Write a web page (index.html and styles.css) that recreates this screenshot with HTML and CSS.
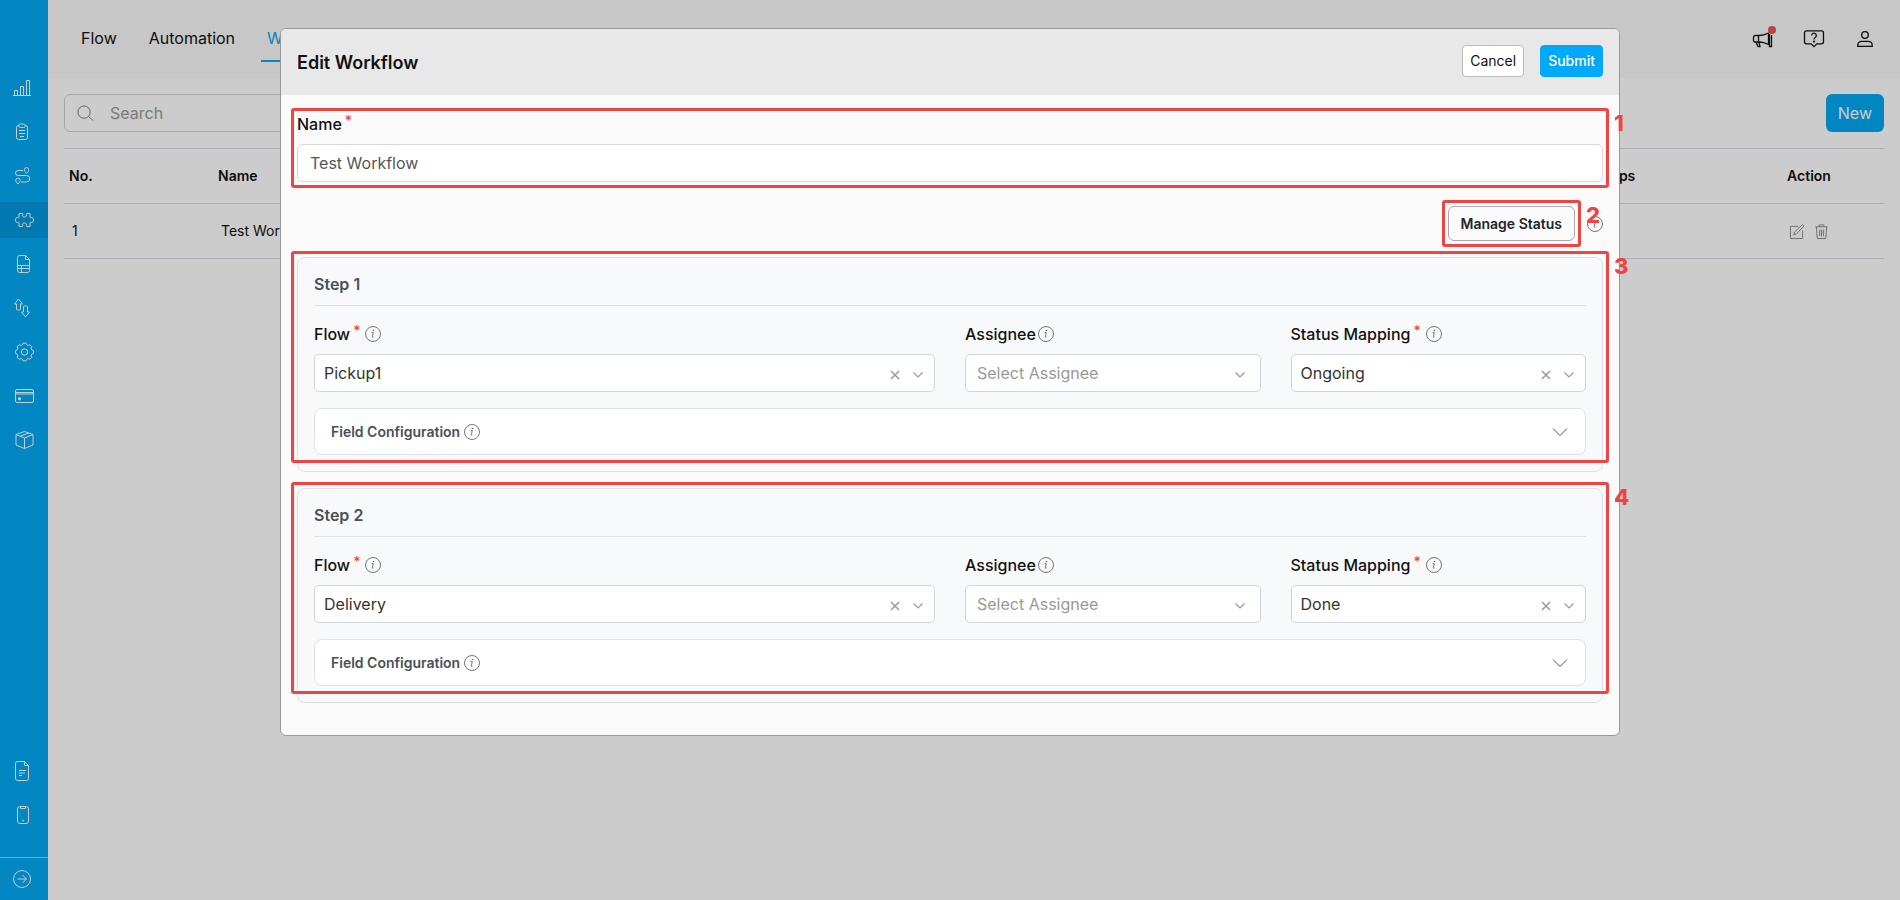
FILE: index.html
```html
<!DOCTYPE html>
<html lang="en">
<head>
  <meta charset="UTF-8" />
  <meta name="viewport" content="width=device-width, initial-scale=1.0">
  <title>Edit Workflow</title>
  <link rel="stylesheet" href="styles.css">
</head>
<body>
  <!-- shared icons -->
  <svg class="sprite" aria-hidden="true">
    <symbol id="info" viewBox="0 0 16 16">
      <circle cx="8" cy="8" r="7.5" fill="none" stroke="currentColor" stroke-width="0.9"/>
      <path d="M6.6 6.6h1.7l-1 4.2c-.1.5.2.6 1.1.2" fill="none" stroke="currentColor" stroke-width="0.9"/>
      <circle cx="8.5" cy="4.5" r="0.8" fill="currentColor"/>
    </symbol>
    <symbol id="chevron" viewBox="0 0 16 16">
      <path d="M1 4.5l7 7 7-7" fill="none" stroke="currentColor"/>
    </symbol>
    <symbol id="chevron-small" viewBox="0 0 10 10">
      <path d="M.5 2.5L5 7l4.5-4.5" fill="none" stroke="currentColor" stroke-width="1.2"/>
    </symbol>
    <symbol id="clear" viewBox="0 0 10 10">
      <path d="M1 1l8 8M9 1L1 9" fill="none" stroke="currentColor" stroke-width="1.5"/>
    </symbol>
  </svg>

  <div class="app">
    <nav class="sidebar" aria-label="Main">
      <a href="#" class="side-link" aria-label="Dashboard">
        <svg viewBox="0 0 20 20"><path d="M-1 17.5h18M.5 17.5v-5h3v5M6.500 17.5v-9h3v9M12.5 17.5v-15h3v15"/></svg>
      </a>
      <a href="#" class="side-link" aria-label="Tasks">
        <svg viewBox="0 0 20 20"><path d="M5 3.500H4.500a2 2 0 0 0-2 2v10a2 2 0 0 0 2 2h7a2 2 0 0 0 2-2v-10a2 2 0 0 0-2-2H11M6.500 2h3a1.500 1.500 0 0 1 0 3.500h-3a1.500 1.500 0 0 1 0-3.500zM5 8.500h6M5 11.500h6M6 14.500h4"/></svg>
      </a>
      <a href="#" class="side-link" aria-label="Routes">
        <svg viewBox="0 0 20 20"><path d="M12.500 7.500c-1.500-1.600-2.200-2.600-2.200-3.700a2.200 2.200 0 0 1 4.400 0c0 1.100-.7 2.100-2.200 3.700zM4 18c-1.500-1.600-2.200-2.600-2.200-3.700a2.200 2.200 0 0 1 4.400 0c0 1.100-.7 2.100-2.200 3.700zM9 4.500H4a2.300 2.300 0 0 0 0 5h8.500a3 3 0 0 1 0 6.500H7"/></svg>
      </a>
      <a href="#" class="side-link active" aria-label="Workflow">
        <svg viewBox="0 0 20 20"><path d="M5 3.500h3c1 0 1 .8.600 1.500-.5 1.200.5 2 1.900 2s2.400-.8 1.900-2c-.4-.7-.4-1.500.6-1.500h3v3.500c0 1 .8.900 1.400.6 1.200-.5 2.100.7 2.100 2.400s-.9 2.900-2.100 2.400c-.6-.3-1.400-.4-1.400.6v3.500h-3c-1 0-1-.8-.6-1.500.5-1.200-.5-2-1.900-2s-2.400.8-1.900 2c.4.7.4 1.500-.6 1.500H5V13c0-1-.8-.9-1.400-.6-1.200.5-2.100-.7-2.100-2.400s.9-2.900 2.100-2.400c.6.300 1.400.4 1.400-.6z"/></svg>
      </a>
      <a href="#" class="side-link" aria-label="Reports">
        <svg viewBox="0 0 20 20"><path d="M5.500 1.500h6l4 4v11a2 2 0 0 1-2 2h-8a2 2 0 0 1-2-2v-13a2 2 0 0 1 2-2zM11.500 1.500v4h4M3.500 11.500h12M3.500 14.500h12M7.500 11.500v7"/></svg>
      </a>
      <a href="#" class="side-link" aria-label="Import and export">
        <svg viewBox="0 0 20 20"><path d="M4.500 1L.5 6h2v5.500a1 1 0 0 0 1 .5h2a1 1 0 0 0 1-.5V6h2zM11.500 19l4-5h-2V8.500a1 1 0 0 0-1-.5h-2a1 1 0 0 0-1 .5V14h-2z"/></svg>
      </a>
      <a href="#" class="side-link" aria-label="Settings">
        <svg viewBox="0 0 20 20"><path d="M9.100 1.100h2.800Q12.800 4.500 15.800 2.700l2 2Q16 7.700 19.400 8.600v2.800Q16 12.300 17.800 15.300l-2 2Q12.800 15.500 11.900 18.900H9.100Q8.200 15.500 5.200 17.300l-2-2Q5 12.300 1.600 11.400V8.600Q5 7.700 3.200 4.700l2-2Q8.200 4.500 9.100 1.100z"/><circle cx="10.5" cy="10" r="3.200"/></svg>
      </a>
      <a href="#" class="side-link" aria-label="Billing">
        <svg viewBox="0 0 20 20"><rect x="1.5" y="3.5" width="18" height="13" rx="1.5"/><path d="M1.500 6.500h18M1.500 8h18"/><circle class="dot" cx="5.5" cy="12.8" r="1.2"/></svg>
      </a>
      <a href="#" class="side-link" aria-label="Products">
        <svg viewBox="0 0 20 20"><path d="M10.500 1.500l8.500 3v10.500l-8.500 3.500L2 15V4.500zM2 4.500l8.500 3.500L19 4.500M10.500 8v10.500M6 6.200L14.800 3"/></svg>
      </a>
      <div class="side-bottom">
        <a href="#" class="side-link" aria-label="Documents">
          <svg viewBox="0 0 20 20"><path d="M3.500.5h7l4 4v13a2 2 0 0 1-2 2h-9a2 2 0 0 1-2-2v-15a2 2 0 0 1 2-2zM10.500.5v4h4M5 9.500h7M5 12h6M5 14.500h3"/></svg>
        </a>
        <a href="#" class="side-link" aria-label="Mobile app">
          <svg viewBox="0 0 20 20"><rect x="3.5" y="1.5" width="11" height="17" rx="2.5"/><path d="M6.500 2v1.500h5V2"/><circle class="dot" cx="9" cy="15.5" r="0.5"/></svg>
        </a>
        <a href="#" class="side-link side-expand" aria-label="Expand menu">
          <svg viewBox="0 0 20 20"><circle cx="8" cy="10" r="8.5"/><path d="M3.500 10h9M8.500 6l4 4-4 4"/></svg>
        </a>
      </div>
    </nav>

    <div class="page">
      <header class="topbar">
        <nav class="tabs" aria-label="Sections">
          <a href="#">Flow</a>
          <a href="#">Automation</a>
          <a href="#" class="current">Workflow</a>
        </nav>
        <div class="top-icons">
          <button class="icon-btn has-alert" aria-label="Announcements">
            <svg viewBox="0 0 20 20"><path d="M2 6.500h4.500c3 0 6-1 9-2.500v11.500c-3-1.500-6-2.500-9-2.500H2A1.700 1.700 0 0 1 .5 11.300V8.200A1.700 1.700 0 0 1 2 6.500zM5.500 6.500V13M3 13l2 4.500h2L6 13M16.500 5v12.500h2V6"/></svg>
          </button>
          <button class="icon-btn" aria-label="Help">
            <svg viewBox="0 0 20 20"><path d="M2.500 1.800h15a2 2 0 0 1 2 2v9a2 2 0 0 1-2 2h-4.700L10 17.600l-2.800-2.800H2.500a2 2 0 0 1-2-2v-9a2 2 0 0 1 2-2zM7.700 6.500a2.300 2.300 0 1 1 3.500 2c-.9.500-1.200.9-1.200 2"/><circle class="dot" cx="10" cy="12.6" r="0.5"/></svg>
          </button>
          <button class="icon-btn" aria-label="Account">
            <svg viewBox="0 0 20 20"><circle cx="10" cy="6" r="3.3"/><path d="M2.800 17.300v-1.100c0-2.500 1.700-3.900 4.200-3.900h6c2.500 0 4.200 1.400 4.200 3.900v1.100z"/></svg>
          </button>
        </div>
      </header>

      <main class="content">
        <div class="toolbar">
          <div class="search">
            <svg viewBox="0 0 18 18"><circle cx="7.5" cy="7.5" r="6.5"/><path d="M12 12l5 4.500"/></svg>
            <input type="search" placeholder="Search" aria-label="Search">
          </div>
          <button class="btn-new">New</button>
        </div>

        <table class="list">
          <thead>
            <tr>
              <th class="col-no">No.</th>
              <th>Name</th>
              <th class="col-steps">Steps</th>
              <th class="col-action">Action</th>
            </tr>
          </thead>
          <tbody>
            <tr>
              <td>1</td>
              <td>Test Workflow</td>
              <td class="col-steps">2</td>
              <td class="col-action">
                <div class="row-actions">
                  <button class="row-btn" aria-label="Edit">
                    <svg viewBox="0 0 16 16"><path d="M10 2.500H1.500v13h13V7M5 11.500l1-3 8.500-8 1.500 1.500-8 8.500z"/></svg>
                  </button>
                  <button class="row-btn" aria-label="Delete">
                    <svg viewBox="0 0 16 16"><path d="M1.500 3h13M5.500 3V1h5v2M2.500 3l1 12.500h9L13.500 3M6 6v7M8 6v7M10 6v7"/></svg>
                  </button>
                </div>
              </td>
            </tr>
          </tbody>
        </table>
      </main>
    </div>
  </div>

  <div class="overlay">
    <form class="modal" role="dialog" aria-labelledby="modalTitle">
      <div class="modal-header">
        <h1 id="modalTitle">Edit Workflow</h1>
        <div class="modal-actions">
          <button type="button" class="btn">Cancel</button>
          <button type="submit" class="btn btn-primary">Submit</button>
        </div>
      </div>

      <div class="modal-body">
        <div class="name-group">
          <label class="field-label" for="wfName">Name<span class="required">*</span></label>
          <input class="text-input" type="text" id="wfName" value="Test Workflow">
          <div class="marker"><span>1</span></div>
        </div>

        <div class="status-row">
          <div class="status-wrap">
            <button type="button" class="btn-status">Manage Status</button>
            <div class="marker"><span>2</span></div>
          </div>
          <svg class="info"><use href="#info"/></svg>
        </div>

        <section class="step">
          <h2>Step 1</h2>
          <div class="step-fields">
            <div class="field wide">
              <div class="label-row">
                <label class="field-label" for="flow1">Flow<span class="required">*</span></label>
                <svg class="info"><use href="#info"/></svg>
              </div>
              <div class="select">
                <select id="flow1"><option>Pickup1</option></select>
                <button type="button" class="clear" aria-label="Clear flow"><svg><use href="#clear"/></svg></button>
                <svg class="arrow"><use href="#chevron-small"/></svg>
              </div>
            </div>
            <div class="field">
              <div class="label-row">
                <label class="field-label" for="assignee1">Assignee</label>
                <svg class="info"><use href="#info"/></svg>
              </div>
              <div class="select empty">
                <select id="assignee1"><option>Select Assignee</option></select>
                <svg class="arrow"><use href="#chevron-small"/></svg>
              </div>
            </div>
            <div class="field">
              <div class="label-row">
                <label class="field-label" for="status1">Status Mapping<span class="required">*</span></label>
                <svg class="info"><use href="#info"/></svg>
              </div>
              <div class="select">
                <select id="status1"><option>Ongoing</option></select>
                <button type="button" class="clear" aria-label="Clear status"><svg><use href="#clear"/></svg></button>
                <svg class="arrow"><use href="#chevron-small"/></svg>
              </div>
            </div>
          </div>
          <button type="button" class="config">
            Field Configuration
            <svg class="info"><use href="#info"/></svg>
            <svg class="expand"><use href="#chevron"/></svg>
          </button>
          <div class="marker"><span>3</span></div>
        </section>

        <section class="step">
          <h2>Step 2</h2>
          <div class="step-fields">
            <div class="field wide">
              <div class="label-row">
                <label class="field-label" for="flow2">Flow<span class="required">*</span></label>
                <svg class="info"><use href="#info"/></svg>
              </div>
              <div class="select">
                <select id="flow2"><option>Delivery</option></select>
                <button type="button" class="clear" aria-label="Clear flow"><svg><use href="#clear"/></svg></button>
                <svg class="arrow"><use href="#chevron-small"/></svg>
              </div>
            </div>
            <div class="field">
              <div class="label-row">
                <label class="field-label" for="assignee2">Assignee</label>
                <svg class="info"><use href="#info"/></svg>
              </div>
              <div class="select empty">
                <select id="assignee2"><option>Select Assignee</option></select>
                <svg class="arrow"><use href="#chevron-small"/></svg>
              </div>
            </div>
            <div class="field">
              <div class="label-row">
                <label class="field-label" for="status2">Status Mapping<span class="required">*</span></label>
                <svg class="info"><use href="#info"/></svg>
              </div>
              <div class="select">
                <select id="status2"><option>Done</option></select>
                <button type="button" class="clear" aria-label="Clear status"><svg><use href="#clear"/></svg></button>
                <svg class="arrow"><use href="#chevron-small"/></svg>
              </div>
            </div>
          </div>
          <button type="button" class="config">
            Field Configuration
            <svg class="info"><use href="#info"/></svg>
            <svg class="expand"><use href="#chevron"/></svg>
          </button>
          <div class="marker"><span>4</span></div>
        </section>
      </div>
    </form>
  </div>
</body>
</html>
```

FILE: styles.css
```css
* {
  box-sizing: border-box;
}
body {
  margin: 0;
  font-family: Inter, "Liberation Sans", Arial, sans-serif;
  font-size: 16px;
  line-height: 20px;
  color: #111;
}
button, input, select {
  font: inherit;
  color: inherit;
}
button {
  cursor: pointer;
}
a {
  color: inherit;
  text-decoration: none;
}
svg {
  display: block;
  overflow: visible;
}
.sprite {
  position: absolute;
  width: 0;
  height: 0;
}

/* App behind the dialog */
.app {
  display: flex;
  min-height: 100vh;
}
.sidebar {
  display: flex;
  flex-direction: column;
  gap: 8px;
  width: 48px;
  padding-top: 70px;
  background: #03a9f4;
}
.side-link {
  display: flex;
  align-items: center;
  height: 36px;
  padding-left: 14px;
}
.side-link.active {
  background: #0398dc;
}
.side-link svg {
  width: 20px;
  height: 20px;
  fill: none;
  stroke: #fff;
}
.side-link .dot {
  fill: #fff;
}
.side-bottom {
  display: flex;
  flex-direction: column;
  gap: 8px;
  margin-top: auto;
}
.side-expand {
  height: 43px;
  margin-top: 16px;
  border-top: 1px solid #81d4fa;
}
.page {
  flex: 1;
}
.topbar {
  display: flex;
  justify-content: space-between;
  align-items: center;
  height: 78px;
  padding: 0 25px 0 27px;
  background: #f9f9f9;
}
.tabs {
  display: flex;
  gap: 20px;
}
.tabs a {
  padding: 12px 6px;
  border-bottom: 2px solid transparent;
}
.tabs .current {
  color: #03a9f4;
  border-color: #03a9f4;
}
.top-icons {
  display: flex;
  gap: 31px;
}
.icon-btn {
  position: relative;
  padding: 0;
  border: 0;
  background: none;
}
.icon-btn svg {
  width: 20px;
  height: 20px;
  fill: none;
  stroke: #111;
  stroke-width: 1.3;
}
.icon-btn .dot {
  fill: #111;
}
.has-alert::after {
  content: "";
  position: absolute;
  top: -3px;
  right: -3px;
  width: 8px;
  height: 8px;
  border-radius: 50%;
  background: #ef5350;
}
.content {
  padding: 16px;
}
.toolbar {
  display: flex;
  justify-content: space-between;
  margin-bottom: 16px;
}
.search {
  display: flex;
  align-items: center;
  gap: 16px;
  width: 400px;
  height: 38px;
  padding: 0 12px;
  border: 1px solid #d0d0d0;
  border-radius: 6px;
}
.search svg {
  width: 17px;
  height: 17px;
  fill: none;
  stroke: #777;
}
.search input {
  flex: 1;
  padding: 0;
  border: 0;
  outline: 0;
  background: none;
}
.search input::placeholder {
  color: #999;
}
.btn-new {
  height: 38px;
  padding: 0 12px;
  border: 0;
  border-radius: 6px;
  background: #03a9f4;
  color: #fff;
}
.list {
  width: 100%;
  border-collapse: collapse;
  table-layout: fixed;
  font-size: 14px;
}
.list tr {
  height: 55px;
  border-top: 1px solid #dcdce4;
  border-bottom: 1px solid #dcdce4;
}
.list th {
  padding: 0 5px;
  font-weight: 600;
  text-align: left;
}
.list td {
  padding: 0 8px;
}
.list .col-no {
  width: 149px;
}
.list .col-steps {
  width: 236px;
  text-align: center;
}
.list .col-action {
  width: 150px;
  text-align: center;
}
.row-actions {
  display: flex;
  justify-content: center;
  gap: 10px;
}
.row-btn {
  padding: 0;
  border: 0;
  background: none;
}
.row-btn svg {
  width: 15px;
  height: 15px;
  fill: none;
  stroke: #888;
}

/* Dialog */
.overlay {
  position: fixed;
  inset: 0;
  padding: 28px 32px;
  overflow: auto;
  background: rgba(0, 0, 0, 0.2);
}
.modal {
  max-width: 1340px;
  margin: 0 auto;
  border: 1px solid #999;
  border-radius: 6px;
  background: #fafafa;
}
.modal-header {
  display: flex;
  justify-content: space-between;
  padding: 16px 16px 18px;
  border-radius: 5px 5px 0 0;
  background: #e8e8e8;
}
.modal-header h1 {
  margin: 0;
  font-size: 18px;
  font-weight: 600;
  line-height: 36px;
  height: 32px;
}
.modal-actions {
  display: flex;
  gap: 16px;
}
.btn {
  height: 32px;
  padding: 0 7px;
  border: 1px solid #bbb;
  border-radius: 4px;
  background: #fff;
  font-size: 14px;
}
.btn-primary {
  border-color: #03a9f9;
  background: #03a9f9;
  color: #fff;
  font-weight: 500;
}
.modal-body {
  padding: 19px 16px 16px;
}
.name-group, .status-wrap {
  position: relative;
}
.field-label {
  font-weight: 500;
}
.name-group .field-label {
  display: block;
  margin-bottom: 10px;
}
.required {
  margin: 0 3px;
  color: #f0443f;
  font-size: 14px;
  line-height: 0;
  vertical-align: 4px;
}
.text-input {
  display: block;
  width: 100%;
  height: 38px;
  padding: 0 12px;
  border: 1px solid #d8d8d8;
  border-radius: 6px;
  background: #fff;
  color: #555;
}
.info {
  flex: none;
  width: 16px;
  height: 16px;
  color: #666;
}
.status-row {
  display: flex;
  justify-content: flex-end;
  align-items: center;
  gap: 12px;
  margin: 24px 0 16px;
}
.btn-status {
  display: block;
  height: 35px;
  padding: 0 12px;
  border: 1px solid #aaa;
  border-radius: 6px;
  background: #fafafa;
  color: #212529;
  font-size: 14px;
  font-weight: 600;
}
.step {
  position: relative;
  margin-bottom: 16px;
  padding: 16px;
  border: 1px solid #dee2e6;
  border-radius: 8px;
  background: #f8f9fb;
}
.step h2 {
  margin: 0 0 18px;
  padding-bottom: 11px;
  border-bottom: 1px solid #dee2e6;
  color: #495057;
  font-size: 16px;
  font-weight: 600;
}
.step-fields {
  display: grid;
  grid-template-columns: repeat(12, 1fr);
  column-gap: 30px;
  margin-bottom: 16px;
}
.field {
  grid-column: span 3;
}
.field.wide {
  grid-column: span 6;
}
.label-row {
  display: flex;
  align-items: center;
  gap: 2px;
  margin-bottom: 10px;
}
.select {
  position: relative;
  color: #333;
}
.select select {
  display: block;
  width: 100%;
  height: 38px;
  padding: 0 60px 0 9px;
  border: 1px solid #d0d4d8;
  border-radius: 5px;
  background: #fff;
  appearance: none;
}
.select.empty select {
  padding-left: 11px;
  color: #999;
}
.select .arrow {
  position: absolute;
  top: 16px;
  right: 12px;
  width: 10px;
  height: 10px;
  color: #999;
  pointer-events: none;
}
.select.empty .arrow {
  right: 16px;
}
.select .clear {
  position: absolute;
  top: 16px;
  right: 35px;
  padding: 0;
  border: 0;
  background: none;
  color: #999;
}
.clear svg {
  width: 10px;
  height: 10px;
}
.config {
  display: flex;
  align-items: center;
  gap: 4px;
  width: 100%;
  height: 47px;
  padding: 0 17px 0 16px;
  border: 1px solid #dee2e6;
  border-radius: 8px;
  background: #fff;
  color: #495057;
  font-size: 14px;
  font-weight: 600;
}
.config .expand {
  width: 16px;
  height: 16px;
  margin-left: auto;
}

/* Numbered callouts drawn over the form */
.marker {
  position: absolute;
  inset: -6px;
  border: 3px solid #ef4444;
  border-radius: 3px;
  pointer-events: none;
}
.marker span {
  position: absolute;
  top: 2px;
  left: 100%;
  margin-left: 8px;
  color: #ef4444;
  font-size: 22px;
  font-weight: 800;
}
.step .marker {
  inset: -7px -7px 8px;
}
```
